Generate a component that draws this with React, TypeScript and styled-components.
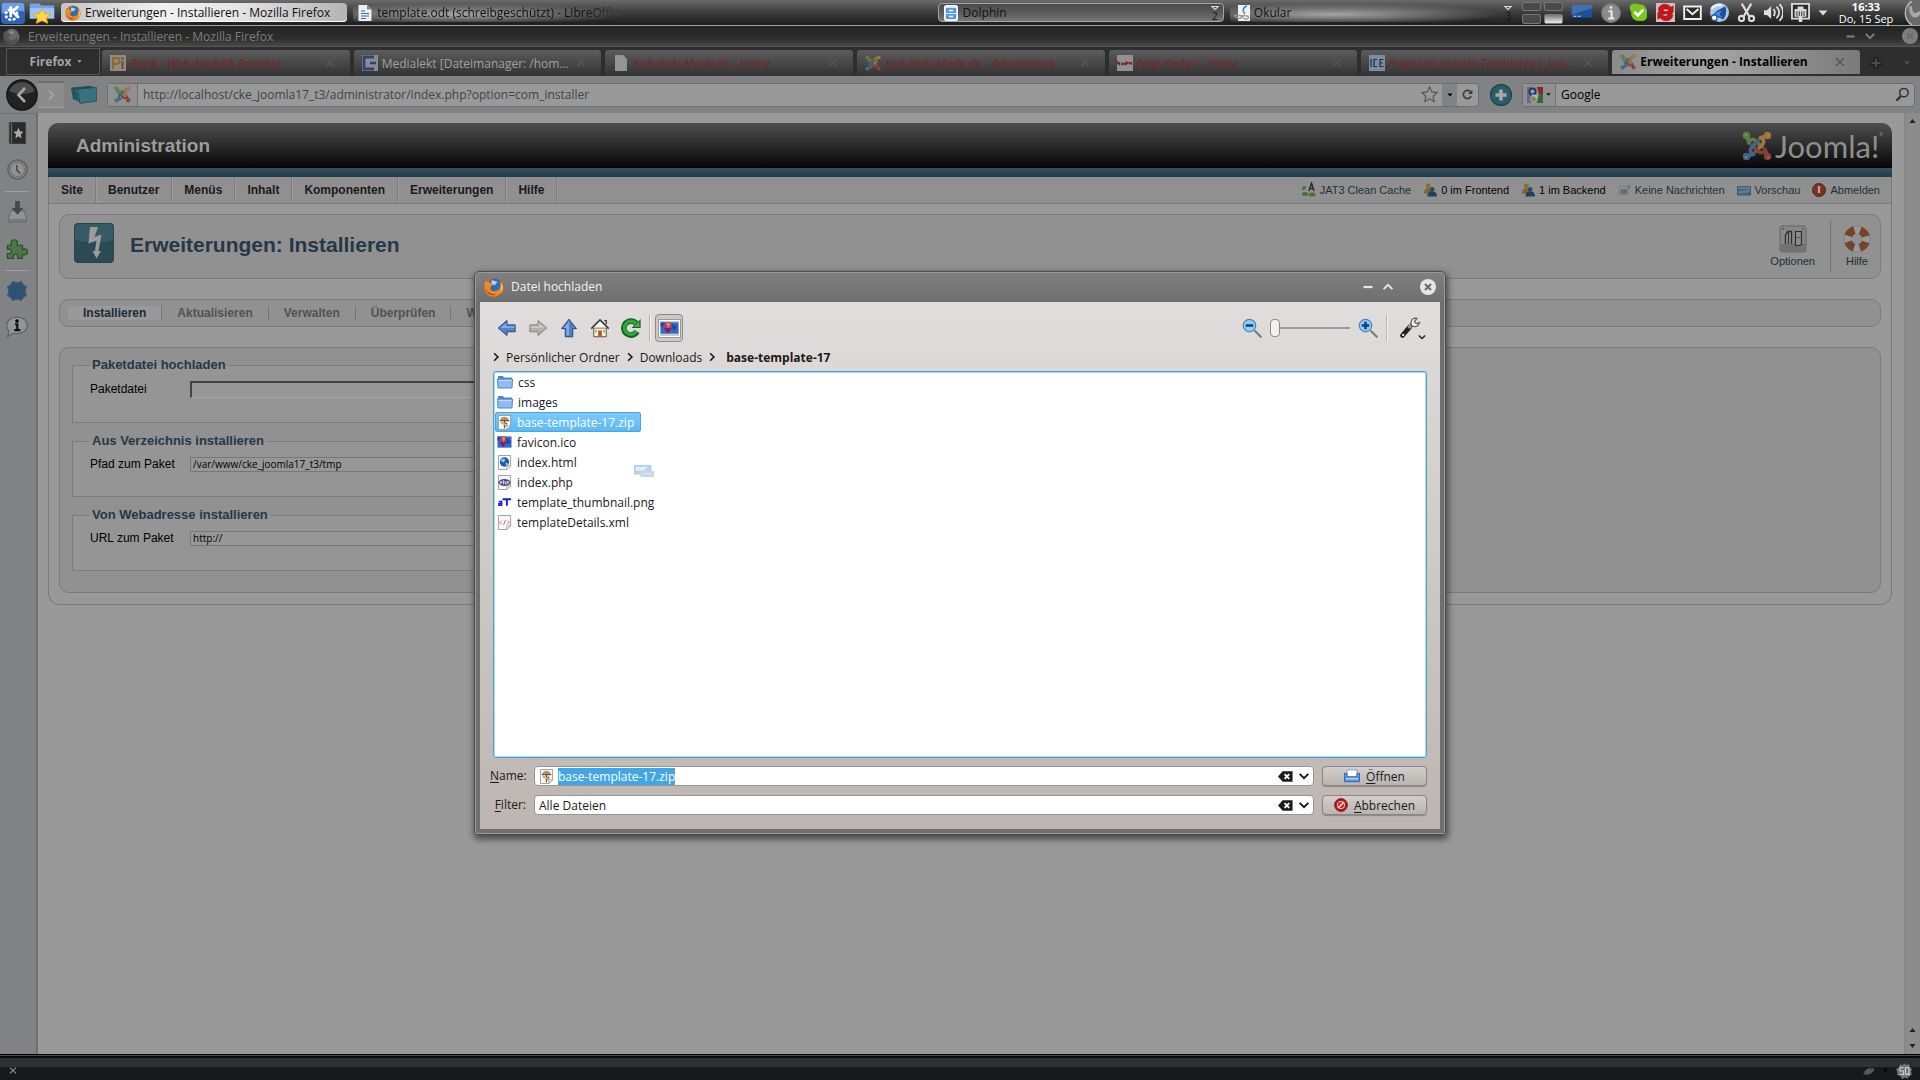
import React, { useEffect, useRef } from 'react';
import styled, { createGlobalStyle, css } from 'styled-components';

const UI = '"Open Sans", "Noto Sans", sans-serif';
const ARIAL = '"Liberation Sans", Arial, sans-serif';

const Global = createGlobalStyle`
  *, *::before, *::after { box-sizing: border-box; }
  body { margin: 0; background: #999; font-family: ${UI}; font-size: 12px; color: #000; }
  button, input, select { font: inherit; color: inherit; margin: 0; padding: 0; border: 0; background: none; }
  a { color: inherit; text-decoration: none; }
  ul { list-style: none; margin: 0; padding: 0; }
  svg { display: block; flex: none; }
`;

/* ---------- icons ---------- */

type IconProps = { name: string; w?: number; h?: number };

const Firefox = ({ grey }: { grey?: boolean }) => (
  <>
    <circle cx="8" cy="8" r="7.6" fill={grey ? '#4a4a4a' : '#e8641b'} />
    <circle cx="8.6" cy="6.4" r="5.4" fill={grey ? '#6a6a6a' : '#2f6db5'} />
    <path d="M6 2.500c2 0 3 1 5 1.500-1 1-2 1-2 2.500-1-.5-3 0-3-1.500z" fill={grey ? '#888' : '#a9daf5'} />
    <path d="M1 3c1 1 2 1 3 1 1 1 3 2 4 2-1 1-3 1-3 3s3 3 5 2c2 0 3-2 3-5 2 2 2 6-1 8-3 2.500-7 2-9.500-.5C.5 11 0 7 1 3z" fill={grey ? '#555' : '#f08a1d'} />
    <path d="M1.500 9c1 3.500 4.500 5 8 4.500-2 2-7 1.500-8-4.500z" fill={grey ? '#444' : '#c63d12'} />
    <path d="M13 4c2.500 2 3 6 .5 9 .8-3 .5-6-.5-9z" fill={grey ? '#777' : '#fcd24a'} />
  </>
);

const Knot = () => (
  <>
    {['#5f7c43', '#9c7440', '#84403a', '#466286'].map((c, i) => (
      <g key={c} transform={`rotate(${i * 90} 12 12)`} stroke={c} fill="none" strokeWidth="3" strokeLinecap="round">
        <circle cx="3.600" cy="3.600" r="2.500" fill={c} strokeWidth="1" />
        <path d="M4 4.500L5.500 9M5.500 9.500C5.500 7 9 5.800 11 7.800L16 12.800" />
        <circle cx="3" cy="3" r=".8" fill="#a8a8a0" stroke="none" opacity=".6" />
      </g>
    ))}
  </>
);

const Page = ({ children }: { children?: React.ReactNode }) => (
  <>
    <path d="M1.500.5h13v11l-4 4h-9z" fill="#f7f7f5" stroke="#9a9a9a" />
    {children}
    <path d="M10.500 15.500v-4h4z" fill="#fff" stroke="#888" strokeWidth=".7" />
  </>
);

const Folder = () => (
  <>
    <path d="M1 3.500V2h5l1 1.500h8V6H1z" fill="#4f86cf" />
    <path d="M.5 5h15l-.5 9H1z" fill="#8fbcf2" stroke="#4f86cf" />
    <path d="M1.500 6.500h13" stroke="#c5defa" />
  </>
);

const Balloon = () => (
  <>
    <rect x=".5" y="1.500" width="15" height="12" fill="#2f6ad2" />
    <path d="M.5 1.500h8l6 5-2 3-12-4z" fill="#2448a0" />
    <circle cx="6.500" cy="5.500" r="3.800" fill="#a03a8b" />
    <path d="M3.500 7.500h6l-2.500 5H6z" fill="#8a1c3f" />
    <path d="M5 2c1-.5 3-.5 4 1L7 8z" fill="#d98a4a" />
  </>
);

const glyphs: Record<string, React.ReactNode> = {
  firefox: <Firefox />,
  firefoxGrey: <Firefox grey />,
  folder: <Folder />,
  image: <Balloon />,
  zip: <Page><path d="M4 4c1-3 7-3 8 0l1 2H3z" fill="#b59465" /><path d="M3 6h10M5 9h6M8 5v9" stroke="#6e5535" strokeWidth="1.400" /><path d="M4 8l7 3" stroke="#c7ae84" strokeWidth="2" /></Page>,
  html: <Page><circle cx="8" cy="7.500" r="5" fill="#1f5aa8" /><path d="M4 6c2-3 4-2 5-1L7 8zM9 8l3 1-2 3z" fill="#9cd0f5" /></Page>,
  php: <Page><ellipse cx="8" cy="8" rx="6.500" ry="3.800" fill="#4a4a86" /><path d="M3.500 10V7h2v1.500H4M7 5.500V10M7 7.500h2V10M10.500 10V7h2v1.500h-2" stroke="#e4e4f4" fill="none" strokeWidth=".9" /></Page>,
  png: <><path d="M2 7h3v4H2V9h3" stroke="#1a1ad0" fill="none" strokeWidth="1.500" /><path d="M6 4.500h9M10.500 4.500V11.500" stroke="#1a1ad0" strokeWidth="2" /></>,
  xml: <Page><path d="M5 6L3 8l2 2M9 5.500l-2 5M11 6l2 2-2 2" stroke="#e0607a" fill="none" /></Page>,
  arrowLeft: <><path d="M1 8l7-6v3.500h6.500v5.500H8V14z" fill="#5484c8" stroke="#24457e" strokeWidth=".8" /><path d="M2.500 8L7.500 4v2.500H14V8z" fill="#86acdf" /></>,
  arrowRight: <><path d="M15 8L8 2v3.500H1.500v5.500H8V14z" fill="#b3b1b0" stroke="#838180" strokeWidth=".8" /><path d="M13.500 8l-5-4v2.500H2V8z" fill="#c9c7c6" /></>,
  arrowUp: <><path d="M8 1l6 7.500h-3V15H5V8.500H2z" fill="#4f80c6" stroke="#24457e" strokeWidth=".8" /><path d="M8 2.500L4 8h2v6h2z" fill="#86acdf" /></>,
  home: <><path d="M3 8h10v7H3z" fill="#f4efe2" stroke="#555" strokeWidth=".8" /><path d="M8 2l5 5.500H3z" fill="#f7f4ec" /><path d="M1 8.500L8 1.500l7 7" fill="none" stroke="#3b3b3b" strokeWidth="1.200" /><path d="M11.500 2h1.500v3" stroke="#3b3b3b" fill="none" /><path d="M6.500 10h3v5h-3z" fill="#b4581c" /><path d="M4 9.500h1.500v2H4zM10.500 9.500H12v2h-1.500z" fill="#d8a037" /></>,
  reload: <><path d="M12.800 10.800A5.600 5.600 0 1 1 12 4.200" fill="none" stroke="#14611d" strokeWidth="4.600" /><path d="M15.700.8v7.200H8.500z" fill="#14611d" /><path d="M12.300 10.700A5.200 5.200 0 1 1 12 4.500" fill="none" stroke="#2fa53a" strokeWidth="2.800" /><path d="M14.800 2.600v4.600h-4.500z" fill="#3cb847" /></>,
  zoomOut: <><path d="M10 10l5.500 5.500" stroke="#7a7a7a" strokeWidth="1.600" /><circle cx="6" cy="6" r="5" fill="#8fcdf5" stroke="#4a86b8" /><path d="M3 6h6" stroke="#123f7d" strokeWidth="2" /></>,
  zoomIn: <><path d="M10 10l5.500 5.500" stroke="#7a7a7a" strokeWidth="1.600" /><circle cx="6" cy="6" r="5" fill="#8fcdf5" stroke="#4a86b8" /><path d="M3 6h6M6 3v6" stroke="#123f7d" strokeWidth="2" /></>,
  wrench: <><path d="M2.500 13.500L8 7" stroke="#222" strokeWidth="3.400" strokeLinecap="round" /><path d="M7 8l3-4" stroke="#999" strokeWidth="2.600" /><path d="M13 1c-3-1-5 2-4 5 2 2 5 1 6-2l-2.500.8-1.300-1.300z" fill="#eee" stroke="#555" strokeWidth=".8" /><circle cx="3" cy="13" r=".9" fill="#ddd" /></>,
  clear: <><path d="M0 8l5-5.500h10.500v11H5z" fill="#1d1d1d" /><path d="M7 5.500l5 5M12 5.500l-5 5" stroke="#fff" strokeWidth="2" /></>,
  chevDown: <path d="M3 5.500l5 5 5-5" fill="none" stroke="currentColor" strokeWidth="2.200" />,
  chevUp: <path d="M3 10.500l5-5 5 5" fill="none" stroke="currentColor" strokeWidth="2.200" />,
  chevRight: <path d="M5.500 3l5 5-5 5" fill="none" stroke="currentColor" strokeWidth="2.200" />,
  minus: <path d="M2 8h12" stroke="currentColor" strokeWidth="3" />,
  close: <><circle cx="8" cy="8" r="8" fill="currentColor" /><path d="M5 5l6 6M11 5l-6 6" stroke="#6d6d6d" strokeWidth="2.200" /></>,
  x: <path d="M3 3l10 10M13 3L3 13" stroke="currentColor" strokeWidth="2" />,
  disk: <><path d="M3 1h10v8H3z" fill="#fff" stroke="#7a9cc8" /><path d="M.5 5v9.500h15V5H13v4H3V5z" fill="#5d9be8" stroke="#2c62b4" /><path d="M2 11h12" stroke="#c3dcfa" strokeWidth="1.500" /></>,
  cancel: <><circle cx="8" cy="8" r="7.300" fill="#b01818" stroke="#7d0d0d" /><circle cx="8" cy="8" r="4.300" fill="#c22a2a" stroke="#efd0d0" strokeWidth="1" /><path d="M4.800 11.200l6.400-6.400" stroke="#f6e6e6" strokeWidth="1.800" /></>,
  kde: <><rect width="16" height="16" rx="2.500" fill="#2a63b8" /><path d="M.5 2.500a2 2 0 0 1 2-2h11a2 2 0 0 1 2 2V7C11 5 5 9 .5 8z" fill="#6f9fe0" /><circle cx="7" cy="9.200" r="3.800" fill="none" stroke="#fff" strokeWidth="1.800" strokeDasharray="2 1" /><path d="M6.500 3v8M11.500 3.200L7.500 7l4.500 4.500" stroke="#fff" strokeWidth="1.800" fill="none" /></>,
  star: <><path d="M.5 3V1h6l1 1.500h8V12H.5z" fill="#6fa6ea" /><path d="M.5 4.500h15V12H.5z" fill="#9cc4f5" /><path d="M8 5l1.700 3.500 3.800.5-2.800 2.600.8 3.900L8 13.600l-3.500 1.900.8-3.900L2.500 9l3.800-.5z" fill="#ffd84a" stroke="#e8a51c" strokeWidth=".6" /></>,
  doc: <><path d="M1.500 0h8.500l4.500 4.500V16h-13z" fill="#f0f0f0" /><path d="M10 0v4.500h4.500" fill="#888" /><path d="M4 6h4M4 8.500h8M4 11h8M4 13.500h5" stroke="#2d6aa5" /></>,
  dolphin: <><rect x="1.500" y=".5" width="13" height="15" rx="1.500" fill="#dbe9f8" stroke="#fff" /><rect x="3" y="3" width="10" height="5" fill="#5a97dc" /><rect x="3" y="9" width="10" height="5" fill="#5a97dc" /><path d="M6 5.500h4M6 11.500h4" stroke="#fff" strokeWidth="1.500" /></>,
  okular: <><path d="M4 0h12v16H4z" fill="#f2f2f2" /><path d="M13 1c-4 1-5 5-2 8" fill="none" stroke="#2d8fd0" strokeWidth="1.600" /><path d="M0 10.500h6c2 0 2 3 0 3H4c-2 0-2-2-3-2.500M7 11c2-1 3 0 6 0 2 0 2 3 0 3h-2c-2 0-2-2-3-3" fill="none" stroke="#999" strokeWidth="1.300" /></>,
  monitor: <><path d="M.5 1h15v12H.5z" fill="#1d4f93" /><path d="M.5 1h15v3L.5 10z" fill="#3d70ac" /><path d="M.5 14h15" stroke="#16294a" strokeWidth="2" /><path d="M2 11.500h2M5 11.500h2" stroke="#cfe4ff" /></>,
  info: <><circle cx="8" cy="8" r="7.500" fill="#8c8c8c" stroke="#777" /><path d="M6 6.500h2.500V12M5.800 12.300h4.800" stroke="#e8e8e8" fill="none" strokeWidth="1.600" /><circle cx="8" cy="3.600" r="1.100" fill="#e8e8e8" /></>,
  skype: <><path d="M1 2c3-3 6-1 8-1 4 0 7 4 6 8 1 3-1 7-5 6-5 1-9-3-8-7-1-2-2-4-1-6z" fill="#7ac81e" /><path d="M4.500 7.500l3 3 4.500-5" stroke="#fff" strokeWidth="2.200" fill="none" /></>,
  sync: <><path d="M0 0h16v16H0z" fill="#dcb9b9" /><path d="M2 6c0-6 9-6 10-2.500l2.500-1V8H9l2-1.500C9.500 4.500 6.500 4.500 6 6.500L9 9c-3 1-6.500 0-7-3z" fill="#c4161c" stroke="#8d0f13" strokeWidth=".4" /><path d="M14 10c0 6-9 6-10 2.500l-2.500 1V8H7L5 9.500c1.500 2 4.500 2 5 0L7 7.500c3-1 6.500-.5 7 2.500z" fill="#c4161c" stroke="#8d0f13" strokeWidth=".4" /></>,
  mail: <><path d="M1 3h14v10.500H1z" fill="#2b2b2b" stroke="#f0f0f0" strokeWidth="1.600" /><path d="M3 5l5 4.500L13 5" fill="none" stroke="#f0f0f0" strokeWidth="1.600" /></>,
  rocket: <><circle cx="8" cy="8" r="8" fill="#a9c8ea" /><path d="M2 12C2 9 6 6 13 3c1 3 1 8-2 11-3-2-5-2-9-2z" fill="#1c4f9e" /><path d="M3 9l7-3-2 4 3 2-5-1z" fill="#4f8ad0" /><circle cx="3.600" cy="12.400" r="2.400" fill="#fff" stroke="#1c4f9e" /><path d="M1 5c2-3 6-4 9-3" stroke="#eef5fd" strokeWidth="2" fill="none" /></>,
  scissors: <g fill="none" stroke="#ddd" strokeWidth="1.800"><path d="M4 .5l6.500 11M12 .5L5.500 11.500" /><circle cx="3.800" cy="13" r="2.200" /><circle cx="12.200" cy="13" r="2.200" /></g>,
  speaker: <><path d="M0 6h2.500L6 2.500v11L2.500 10H0z" fill="#ddd" /><path d="M8 5c1.500 2 1.500 4 0 6M10.500 3c3 3 3 7 0 10M13 1c4 4 4 10 0 14" fill="none" stroke="#ddd" strokeWidth="1.500" /></>,
  net: <><path d="M.8.8h14.400v12.400H.8z" fill="#2c2c2c" stroke="#ddd" strokeWidth="1.500" /><path d="M3 5h2.500V3h5v2H13v6.500H3z" fill="#d8d8d8" /><path d="M5 7v4M7 7v4M9 7v4M11 7v4" stroke="#444" strokeWidth=".9" /><path d="M6.500 11h3v5h-3z" fill="#ddd" /></>,
  triDown: <path d="M1 4h14l-7 8z" fill="currentColor" />,
  triUp: <path d="M1 12h14L8 4z" fill="currentColor" />,
  triHollow: <path d="M1.500 4h13L8 12z" fill="none" stroke="currentColor" strokeWidth="2.500" />,
  cashew: <><path d="M16 0H8C-1 4-1 12 8 16h8z" fill="#6a6a6a" /><path d="M8 0C-1 4-1 12 8 16" fill="none" stroke="#b5b5b5" strokeWidth="1.300" /><path d="M6.500 3.500c0 4 2 6 4.500 6s4-1 4-2.500" stroke="#a9a9a9" fill="none" strokeWidth="3" /></>,
  joomla: <g transform="scale(.667)"><Knot /></g>,
  pi: <><path d="M0 0h16v16H0z" fill="#8f8c86" /><path d="M3 14V3h3.500a3 3 0 0 1 0 6H3" fill="none" stroke="#8a6d25" strokeWidth="2" /><path d="M12.500 6v8" stroke="#7a4330" strokeWidth="2" /><circle cx="12.500" cy="3.500" r="1.300" fill="#7a4330" /></>,
  medialekt: <><path d="M0 0h16v16H0z" fill="#8c8c90" /><path d="M12 2H2v12h10" fill="none" stroke="#2f4377" strokeWidth="2.800" /><path d="M8 8h6" stroke="#2f4377" strokeWidth="2.500" /></>,
  blank: <path d="M2 0h8l4 4v12H2z" fill="#949494" />,
  yorker: <><path d="M0 0h16v16H0z" fill="#929292" /><path d="M.8 9.500V7l1.700 2.500V7M4 8h1.500V9.500H4M6.500 8l.8 1.500.8-1.500.8 1.500L9.500 7l1 1.500 1-1.500M12.500 7v2.500M15 7l-1.500 1.200L15 9.500" stroke="#7c2020" fill="none" strokeWidth="1.200" /></>,
  ice: <><path d="M0 0h16v16H0z" fill="#7d8ca0" /><path d="M2 4v8M8 4.500H5v7h3M14.500 4.500H11v7h3.500M11 8h3" stroke="#1e2e48" fill="none" strokeWidth="1.200" /></>,
  plusCross: <path d="M6 2h4v4h4v4h-4v4H6v-4H2V6h4z" fill="#4a4a4a" stroke="#161616" strokeWidth="1.300" />,
  back: <><circle cx="8" cy="8" r="7.600" fill="#222" stroke="#111" strokeWidth=".6" /><path d="M1.500 6a7 7 0 0 1 13 0C10 8 6 8 1.500 6z" fill="#4c4c4c" /><path d="M9.500 4.500L6.200 8l3.300 3.500" fill="none" stroke="#a8a8a8" strokeWidth="1.300" /></>,
  group: <><path d="M.3 2.500L12 1v10L1.500 12z" fill="#285660" stroke="#1d444d" strokeWidth=".5" /><path d="M2 3L13.500 1.500v11L3.500 13.500z" fill="#2d616c" stroke="#1d444d" strokeWidth=".5" /><path d="M4 3.500L15.800 2v11.500L5.500 15.500z" fill="#37737e" stroke="#1d444d" strokeWidth=".5" /></>,
  starOutline: <path d="M8 1l2.100 4.600 5 .6-3.700 3.400 1 5L8 12.100l-4.400 2.500 1-5L.9 6.200l5-.6z" fill="none" stroke="#555" strokeWidth="1.100" />,
  reloadSmall: <><path d="M12.500 10A5 5 0 1 1 11.500 4.500" fill="none" stroke="#3f3f3f" strokeWidth="2" /><path d="M14 2v5.500H8.500z" fill="#3f3f3f" /></>,
  add: <><circle cx="8" cy="8" r="7.600" fill="#2b5d68" stroke="#1f444c" /><path d="M8 4v8M4 8h8" stroke="#a8a8a8" strokeWidth="2.600" /></>,
  google: <><path d="M0 0h16v16H0z" fill="#8c8c8c" /><path d="M10 0h6v7h-4z" fill="#8a2721" /><path d="M12 7h4v9h-6z" fill="#2c6a3a" /><path d="M0 0h4v16H0z" fill="#2d4a86" opacity=".5" /><circle cx="5.500" cy="4.500" r="3" fill="#a0a0a0" stroke="#1d3a78" strokeWidth="2" /><circle cx="6.500" cy="12" r="3" fill="#8d8048" stroke="#a8a8a8" /><path d="M5 8l5 1-1 2" stroke="#bbb" fill="none" strokeWidth="1.500" /></>,
  search: <><circle cx="9.500" cy="6" r="4.500" fill="none" stroke="#333" strokeWidth="1.600" /><path d="M6.500 9.500L1.500 14.500" stroke="#333" strokeWidth="2.400" /></>,
  book: <><rect x="1" y="0" width="14" height="16" rx="1" fill="#2a2a2a" stroke="#555" strokeWidth=".6" /><path d="M3 .5v15" stroke="#666" /><path d="M8.800 4l1.200 2.800 3 .2-2.300 2 .8 3-2.700-1.700L6.100 12l.8-3-2.300-2 3-.2z" fill="#aaa" /></>,
  clock: <><circle cx="8" cy="8" r="7.300" fill="#858585" stroke="#5b5b5b" strokeWidth="1" /><circle cx="8" cy="8" r="5.400" fill="#929292" stroke="#6a6a6a" strokeWidth=".7" /><path d="M7.500 4.500V8.500l2.500 2.500" stroke="#4a4a4a" fill="none" strokeWidth="1.200" /></>,
  download: <><path d="M2.500 7h11l2 5.500v3H.5v-3z" fill="#939393" stroke="#666" strokeWidth=".7" /><path d="M1 13h14v2.500H1z" fill="#777" /><path d="M6 0h4v5h3l-5 5-5-5h3z" fill="#484848" /></>,
  puzzle: <path d="M1 6h3c-1-2 0-4 2-4s3 2 2 4h4v3c2-1 3.700 0 3.700 1.800S14 13.500 12 12.500V15.500H8.500c.5-2-.2-3-1.500-3s-2 1-1.500 3H1v-3.500c2 .5 3-.2 3-1.500S3 8.500 1 9z" fill="#4d7745" stroke="#2c4f26" strokeWidth=".9" />,
  burst: <path d="M5 .8l1.500 1h3l1.500-1 1.700 2.500 2.500 1.700-1 1.500v3l1 1.500-2.500 1.700-1.700 2.500-1.500-1h-3l-1.500 1-1.700-2.500L.8 11l1-1.500v-3L.8 5l2.500-1.700z" fill="#2f5173" stroke="#3f5c78" strokeWidth=".5" />,
  bubble: <><path d="M8 .8c4.500 0 7.500 2.700 7.500 6s-3 6-7.500 6c-1 0-2 0-3-.4L1.200 15.200l1-4C1 10 .5 8.500.5 6.800.5 3.500 3.500.8 8 .8z" fill="#8f979d" stroke="#586068" strokeWidth=".8" /><circle cx="8" cy="3.600" r="1.300" /><path d="M6.500 6H8.200v4M6 10.200h4.500" stroke="#111" fill="none" strokeWidth="1.600" /></>,
  bolt: <><rect x=".3" y=".3" width="39.400" height="39.400" rx="4" fill="#2b4a54" stroke="#1e353c" strokeWidth=".8" /><path d="M1 5a4 4 0 0 1 4-4h30a4 4 0 0 1 4 4v12C28 20 12 20 1 17z" fill="#365a66" /><path d="M16 4h8l-3.500 10 7-2.500L24.500 28H27l-4.500 7.500L18.500 28h2.500l1.500-10.500-8 3z" fill="#9c9c9c" /></>,
  jat: <><ellipse cx="4" cy="6" rx="2.500" ry="1.500" fill="#4f6e35" transform="rotate(-40 4 6)" /><ellipse cx="5" cy="12" rx="3" ry="2" fill="#4f6e35" /><ellipse cx="12" cy="12.500" rx="3.500" ry="2" fill="#4f6e35" /><path d="M9 9l2.500-8L14 9M10 6.500h3" stroke="#26323a" fill="none" strokeWidth="1.500" /></>,
  users: <><circle cx="6" cy="3.500" r="2.800" fill="#8d6a35" /><path d="M1 12c0-4 2-6 5-6s4 2 4 6z" fill="#84602c" /><circle cx="10.500" cy="7" r="2.500" fill="#2c4963" /><path d="M5 15.500c0-4 2-6 5.500-6s5.500 2 5.500 6z" fill="#243f58" /></>,
  note: <><path d="M1 3h11v12H1z" fill="#8a8d90" stroke="#74777a" strokeWidth=".7" /><path d="M4 8h6v4H4zM4 8l3 2.500L10 8" fill="none" stroke="#35505f" /><path d="M12 2l3 2-3 3" fill="none" stroke="#555" /></>,
  preview: <><path d="M.5 2.500h15v12H.5z" fill="#45647d" stroke="#2b4459" /><path d="M1 4.500h14" stroke="#8296a6" strokeWidth="1.500" /><path d="M1 9l14-3v4L1 13z" fill="#5c7c95" /></>,
  power: <><circle cx="8" cy="8" r="7.500" fill="#7a3222" stroke="#54241a" /><path d="M8 3.500v8" stroke="#b9a49e" strokeWidth="2.600" /></>,
  options: <><rect x="1" y="1" width="26" height="26" rx="2" fill="#868686" stroke="#656565" /><path d="M1.500 19h25v6a2 2 0 0 1-2 2h-21a2 2 0 0 1-2-2z" fill="#727272" /><path d="M6.500 19v-9l2.500-3.500h3.500V19" fill="#8c8c8c" stroke="#2f2f2f" strokeWidth="1.300" /><path d="M9.500 7v12" stroke="#2f2f2f" /><path d="M16.500 6.500h6V19l-2 1.500h-4z" fill="#8c8c8c" stroke="#2f2f2f" strokeWidth="1.200" /><path d="M16.500 12.500h6" stroke="#555" /><circle cx="4" cy="4" r=".9" fill="#555" /><circle cx="24" cy="4" r=".9" fill="#555" /></>,
  ring: <><circle cx="14" cy="14" r="9.200" fill="none" stroke="#989898" strokeWidth="8" /><circle cx="14" cy="14" r="9.200" fill="none" stroke="#74432a" strokeWidth="8" strokeDasharray="8.450 6" strokeDashoffset="-3" /><circle cx="14" cy="14" r="13.200" fill="none" stroke="#6d6d6d" strokeWidth=".5" /></>,
  ghost: <><path d="M0 1h14v11H0z" fill="#b9d2ea" /><path d="M5 8h11v7H5z" fill="#c9d6e4" /><path d="M2 4h8l-2 3H2zM7 11h7" stroke="#e9f3fb" fill="#e0edf8" /></>,
  addonBird: <path d="M1 13c0-5 4-9 9-10l5 1-1 5-5 4-5 1zM9 6l3-1" fill="#5b5b5b" stroke="#3a3a3a" />,
  sq: <><path d="M8 0l2 2 3-1 .5 3L16 6l-1 2.500 1 3-3 1-1 3-3-1-3 1.500-1.500-3L1 12l.5-3L0 6l3-1.500L4 1.500l3 .8z" fill="#777" /><path d="M7.500 4.500H4V8h3.500v3.500H3.500M9.500 4.500H13v7H9.500zM11.500 10l2.500 3" fill="none" stroke="#ccc" strokeWidth="1.100" /></>,
};

const boxes: Record<string, string> = { bolt: '0 0 40 40', options: '0 0 28 28', ring: '0 0 28 28' };

const Icon = ({ name, w = 16, h = w }: IconProps) => (
  <svg width={w} height={h} viewBox={boxes[name] ?? '0 0 16 16'} preserveAspectRatio="none" aria-hidden="true">
    {glyphs[name]}
  </svg>
);

/* ---------- desktop panel ---------- */

const Desktop = styled.div`
  display: flex;
  flex-direction: column;
  min-height: 100vh;
  position: relative;
`;

const Panel = styled.header`
  display: flex;
  align-items: center;
  height: 26px;
  padding-left: 1px;
  background: linear-gradient(#6a6a6a, #3c3c3c 50%, #1c1c1c);
  border-bottom: 1px solid #a2a2a2;
`;

const Launchers = styled.div`
  display: flex;
  align-items: center;
  gap: 4px;
  width: 60px;
`;

const Tasks = styled.nav`
  flex: 1;
  min-width: 0;
  display: grid;
  grid-template-columns: repeat(5, minmax(0, 1fr));
  gap: 6px;
`;

const Task = styled.button<{ $look?: 'active' | 'group' | 'min'; $col?: number }>`
  display: flex;
  align-items: center;
  gap: 4px;
  height: 19px;
  padding: 0 4px;
  border-radius: 4px;
  text-align: left;
  color: #111;
  grid-column: ${p => p.$col};
  white-space: nowrap;
  ${p => p.$look === 'active' && css`
    background: linear-gradient(90deg, #c4c4c4, #f0f0f0 35%, #e6e6e6 60%, #b4b4b4);
    box-shadow: inset 0 -1px 0 #fff;
  `}
  ${p => p.$look === 'group' && css`
    background: linear-gradient(#4a4a4a, #5e5e5e 60%, #777);
    border: 1px solid #a5a5a5;
  `}
  ${p => p.$look === 'min' && css`
    background: radial-gradient(ellipse at 36% 60%, #a6a6a6, rgba(90, 90, 90, 0) 66%);
  `}
`;

const TaskText = styled.span<{ $fade?: boolean }>`
  flex: 1;
  mask-image: ${p => (p.$fade ? 'linear-gradient(90deg, #000 80%, transparent 96%)' : 'none')};
`;

const Count = styled.span`
  display: flex;
  flex-direction: column;
  align-items: center;
  color: #ddd;
  b { color: #111; font-size: 10px; line-height: 10px; font-weight: 400; }
`;

const Tray = styled.div`
  flex: none;
  display: flex;
  align-items: center;
  gap: 8px;
  padding-left: 6px;
  color: #ddd;
`;

const Pager = styled.div`
  display: grid;
  grid-template-columns: 19px 19px;
  grid-template-rows: 9px 10px;
  gap: 3px;
`;

const Desk = styled.button<{ $on?: boolean }>`
  border: 1px solid #777;
  border-radius: 2px;
  background: ${p => (p.$on ? 'linear-gradient(#777, #eee)' : '#4a4a4a')};
`;

const Clock = styled.time`
  width: 60px;
  text-align: center;
  color: #fff;
  font-size: 11px;
  line-height: 12px;
  b { display: block; }
`;

/* ---------- browser ---------- */

const TitleBar = styled.div`
  display: flex;
  align-items: center;
  height: 21px;
  padding: 0 0 0 3px;
  background: linear-gradient(#242424, #2c2c2c 60%, #484848);
  border-bottom: 1px solid #555;
  color: #7d7d7d;
`;

const WindowName = styled.span`
  flex: 1;
  margin-left: 8px;
`;

const WinButton = styled.button`
  display: grid;
  place-items: center;
  width: 20px;
  height: 16px;
`;

const TabBar = styled.div`
  display: flex;
  align-items: flex-end;
  height: 29px;
  padding: 0 6px;
  gap: 4px;
  background: #2e2e2e;
`;

const FirefoxButton = styled.button`
  width: 94px;
  height: 27px;
  align-self: center;
  display: flex;
  align-items: center;
  justify-content: center;
  gap: 6px;
  padding-left: 6px;
  border: 1px solid #565656;
  background: #2d2d2d;
  color: #a5a5a5;
  font-weight: 700;
  margin-right: -2px;
`;

const Tab = styled.div<{ $active?: boolean; $dirty?: boolean }>`
  flex: 1;
  min-width: 0;
  height: ${p => (p.$active ? 24 : 26)}px;
  align-self: ${p => (p.$active ? 'center' : 'flex-end')};
  display: flex;
  align-items: center;
  gap: 4px;
  padding: 0 14px 0 8px;
  border-radius: 3px 3px 0 0;
  background: ${p => (p.$active ? 'linear-gradient(90deg, #8a8a8a, #a5a5a5 40%, #7a7a7a)' : 'linear-gradient(#5c5c5c, #333)')};
  color: ${p => (p.$active ? '#000' : p.$dirty ? '#762424' : '#a0a0a0')};
  font-style: ${p => (p.$dirty ? 'italic' : 'normal')};
  font-weight: ${p => (p.$active ? 700 : 400)};
`;

const TabTitle = styled.button`
  flex: 1;
  min-width: 0;
  white-space: nowrap;
  text-align: left;
  font-style: inherit;
  font-weight: inherit;
`;

const Plain = styled.button`
  display: grid;
  place-items: center;
  color: #555;
`;

const TabTools = styled.div`
  display: flex;
  align-items: center;
  justify-content: space-between;
  width: 45px;
  height: 26px;
  margin-left: 5px;
  padding-right: 4px;
`;

const NavBar = styled.div`
  display: flex;
  align-items: center;
  height: 37px;
  padding: 0 5px 0 6px;
  background: #818284;
`;

const Forward = styled.button`
  width: 26px;
  height: 27px;
  display: grid;
  place-items: center;
  background: #8c8c8d;
  border-top: 2px solid #6e6e6f;
  border-bottom: 1px solid #9b9b9b;
  color: #a5a5a5;
`;

const Field = styled.div<{ $w?: number }>`
  display: flex;
  align-items: center;
  height: 24px;
  flex: ${p => (p.$w ? `0 0 ${p.$w}px` : '1')};
  background: #999;
  border: 1px solid #6d6d6f;
  border-radius: 3px;
`;

const SiteIcon = styled.span<{ $pad: number }>`
  display: flex;
  align-items: center;
  gap: 3px;
  height: 22px;
  padding: 0 ${p => p.$pad}px;
  border-right: 1px solid #707070;
  background: #909090;
  color: #111;
`;

const Address = styled.input`
  flex: 1;
  min-width: 0;
  height: 20px;
  padding-left: 5px;
  outline: 0;
  color: #444;
`;

const SearchText = styled(Address)`
  color: #000;
`;

const Gap = styled.span<{ $w: number }>`
  width: ${p => p.$w}px;
  flex: none;
`;

const DropCell = styled.button`
  width: 15px;
  height: 22px;
  margin: 0 4px;
  display: grid;
  place-items: center;
  background: #828385;
`;

const Viewport = styled.div`
  flex: 1;
  display: flex;
  background: #999;
`;

const SideBar = styled.aside`
  width: 38px;
  padding: 7px 0 0 5px;
  display: flex;
  flex-direction: column;
  align-items: flex-start;
  gap: 12px;
  background: #818284;
  border-right: 2px solid #6f6f70;
  border-top: 1px solid #6f6f70;
  button { width: 24px; height: 24px; }
`;

const SideRule = styled.hr`
  width: 24px;
  margin: -2px 0 -4px;
  border: 0;
  border-top: 1px solid #a0a0a0;
`;

const Scroll = styled.div`
  width: 16px;
  display: flex;
  flex-direction: column;
  align-items: center;
  padding: 4px 0;
  gap: 8px;
  background: #8c8c8c;
  border-left: 1px solid #858585;
  button:first-child { margin-bottom: auto; }
  button { color: #222; }
`;

const StatusBar = styled.footer`
  display: flex;
  align-items: center;
  gap: 8px;
  height: 26px;
  padding: 6px 8px 0;
  border-top: 1px solid #000;
  box-shadow: inset 0 1px 0 #4b4b4b, inset 0 3px 0 #0a0a0a;
  background: linear-gradient(#2e3133 50%, #17191a 50%);
  button { color: #8a8a8a; }
  button:first-child { margin-right: auto; }
`;

/* ---------- Joomla administration ---------- */

const Admin = styled.main`
  flex: 1;
  min-width: 0;
  padding: 10px 12px 0 10px;
  font-family: ${ARIAL};
`;

const AdminHead = styled.div`
  display: flex;
  align-items: center;
  justify-content: space-between;
  height: 54px;
  padding: 0 9px 9px 28px;
  background: linear-gradient(#4f4f4f, #060606 45px, #345160 45px, #233a47);
  border-radius: 10px 10px 0 0;
  color: #9c9c9c;
  h1 { margin: 0; font-size: 19px; line-height: 24px; }
`;

const Brand = styled.a`
  display: flex;
  align-items: center;
  gap: 3px;
  font: 400 31px/30px Lato, sans-serif;
  color: #8e8e8e;
  sup { font-size: 9px; line-height: 12px; align-self: flex-start; margin-left: -3px; }
`;

const Frame = styled.div`
  border: 1px solid #7a7a7a;
  border-top: 0;
  border-radius: 0 0 12px 12px;
`;

const MenuBar = styled.div`
  display: flex;
  align-items: center;
  height: 27px;
  background: #909090;
  border-bottom: 1px solid #787878;
`;

const MenuItem = styled.a`
  height: 26px;
  line-height: 26px;
  padding: 0 12px;
  border-right: 1px solid #7e7e7e;
  box-shadow: 1px 0 0 #9c9c9c;
  font-size: 12px;
  font-weight: 700;
  color: #1a1a1a;
`;

const StatusLinks = styled.div`
  margin-left: auto;
  display: flex;
  gap: 12px;
  padding-right: 11px;
  font-size: 11px;
`;

const StatusLink = styled.a<{ $plain?: boolean }>`
  display: flex;
  align-items: center;
  gap: 4px;
  color: ${p => (p.$plain ? '#000' : '#1c2f3c')};
`;

const Content = styled.div`
  display: flex;
  flex-direction: column;
  gap: 20px;
  padding: 10px 10px 11px;
`;

const Card = styled.section`
  background: #919191;
  border: 1px solid #7b7b7b;
  border-radius: 10px;
`;

const TitleCard = styled(Card)`
  display: flex;
  align-items: center;
  height: 65px;
  padding: 0 9px 7px 14px;
  gap: 16px;
  h2 { flex: 1; margin: 3px 0 0; font-size: 21px; line-height: 26px; color: #263846; }
`;

const ToolList = styled.div`
  display: flex;
  gap: 15px;
  align-items: flex-start;
  margin-top: 6px;
`;

const Tool = styled.button<{ $line?: boolean }>`
  display: flex;
  flex-direction: column;
  align-items: center;
  gap: 2px;
  height: 52px;
  font-size: 11px;
  color: #1c2f3c;
  padding: ${p => (p.$line ? '5px 0 0 12px' : '5px 0 0 0')};
  border-left: ${p => (p.$line ? '1px solid #747474' : '0')};
`;

const SubMenu = styled(Card)`
  display: flex;
  align-items: center;
  height: 28px;
  padding-left: 8px;
`;

const SubItem = styled.a<{ $active?: boolean }>`
  line-height: 14px;
  padding: 0 15px;
  font-size: 12px;
  font-weight: 700;
  color: ${p => (p.$active ? '#1c2c39' : '#525252')};
  background: ${p => (p.$active ? '#999' : 'none')};
  border-right: 1px solid #757575;
`;

const FormCard = styled(Card)`
  display: flex;
  flex-direction: column;
  gap: 10px;
  padding: 9px 12px 21px;
`;

const FieldSet = styled.fieldset`
  width: 70%;
  margin: 0;
  padding: 8px 17px 24px;
  border: 1px solid #7b7b7b;
  background: #959595;
  background-clip: padding-box;
  legend { padding: 0 3px; margin-left: -1px; font-size: 13px; line-height: 16px; font-weight: 700; color: #263846; }
`;

const FormRow = styled.label`
  display: flex;
  align-items: center;
  font-size: 12px;
  line-height: 15px;
  span { width: 100px; }
`;

const Entry = styled.input<{ $sunken?: boolean }>`
  width: 500px;
  height: ${p => (p.$sunken ? 17 : 15)}px;
  font-family: ${UI};
  font-size: 10px;
  padding: 0 2px;
  background: #979797;
  border: 1px solid #777;
  ${p => p.$sunken && css`
    border-width: 2px 1px 1px 2px;
    border-style: solid;
    border-color: #444 #999 #a2a2a2 #444;
  `}
`;

/* ---------- file dialog ---------- */

const Dialog = styled.section`
  position: absolute;
  top: 271px;
  left: 50%;
  transform: translateX(-50%);
  width: 972px;
  padding: 0 5px 5px;
  background: linear-gradient(#808080, #6f6f6f 30px);
  border: 1px solid #4d4d4d;
  border-radius: 5px 5px 3px 3px;
  box-shadow: inset 0 0 0 1px #9a9a9a, 1px 3px 7px 1px rgba(0, 0, 0, .55);
`;

const DialogTitle = styled.header`
  display: flex;
  align-items: center;
  height: 30px;
  padding: 0 2px 0 4px;
  color: #f2f2f2;
  h2 { flex: 1; margin: 0 0 0 7px; font-size: 12px; line-height: 16px; font-weight: 400; }
  button { color: #e6e6e6; }
`;

const DialogBody = styled.div`
  padding: 12px 13px 14px 10px;
  background: linear-gradient(#e0dddc, #d4cfcd 35%, #bdb5b1);
`;

const Tools = styled.div`
  display: flex;
  align-items: center;
  height: 28px;
  padding-left: 4px;
`;

const ToolButton = styled.button`
  width: 26px;
  height: 26px;
  margin-right: 5px;
  display: grid;
  place-items: center;
`;

const ToolRule = styled.span`
  width: 1px;
  height: 26px;
  background: #b9b5b3;
  box-shadow: 1px 0 0 #f4f3f2;
`;

const Preview = styled.button`
  width: 28px;
  height: 28px;
  margin-left: 5px;
  display: grid;
  place-items: center;
  border: 1px solid #8e8b8a;
  border-radius: 4px;
  background: #cbc8c6;
`;

const PreviewImage = styled.span`
  border: 1px solid #fff;
  outline: 1px solid #999;
`;

const ZoomTools = styled.div`
  margin-left: auto;
  display: flex;
  align-items: center;
  gap: 8px;
  color: #222;
`;

const Slider = styled.input`
  appearance: none;
  width: 80px;
  height: 20px;
  &::-webkit-slider-runnable-track { height: 2px; background: #9d9a98; }
  &::-webkit-slider-thumb {
    appearance: none;
    width: 10px;
    height: 18px;
    margin-top: -8px;
    border: 1px solid #8d8a88;
    border-radius: 4px;
    background: #f2f1f0;
  }
`;

const WrenchButton = styled.button`
  display: flex;
  align-items: flex-end;
  margin-left: 4px;
  svg + svg { margin: 0 0 -3px -4px; }
`;

const Crumbs = styled.nav`
  display: flex;
  align-items: center;
  height: 20px;
  margin: 5px 0 4px;
  gap: 4px;
  color: #1a1a1a;
  a:last-child { font-weight: 700; margin-left: 4px; }
`;

const Files = styled.ul`
  height: 387px;
  margin-left: 3px;
  padding: 0 0 0 1px;
  background: #fff;
  border: 1px solid #4e9fc9;
  box-shadow: inset 0 0 0 1px #a8dcf6;
  border-radius: 3px;
`;

const File = styled.button<{ $selected?: boolean }>`
  display: flex;
  align-items: center;
  gap: 5px;
  height: 20px;
  padding: 0 7px 0 2px;
  border-radius: 3px;
  color: ${p => (p.$selected ? '#fff' : '#1a1a1a')};
  background: ${p => (p.$selected ? 'linear-gradient(#7fcbfc, #5ab8f5)' : 'none')};
  box-shadow: ${p => (p.$selected ? 'inset 0 0 0 1px #4aa5e0' : 'none')};
`;

const DragGhost = styled.span`
  position: absolute;
  left: 159px;
  top: 192px;
`;

const Fields = styled.form`
  display: grid;
  grid-template-columns: 36px 1fr 105px;
  column-gap: 8px;
  row-gap: 9px;
  margin-top: 8px;
  color: #1a1a1a;
  label { text-align: right; line-height: 20px; }
  u { text-underline-offset: 2px; }
`;

const Combo = styled.div`
  display: flex;
  align-items: center;
  gap: 4px;
  height: 20px;
  padding: 0 2px 0 4px;
  background: #fff;
  border: 1px solid #9a9492;
  border-radius: 4px;
`;

const NameInput = styled.input`
  flex: 1;
  height: 18px;
  outline: 0;
  &::selection { background: #42a6e4; color: #fff; }
`;

const FilterSelect = styled.select`
  flex: 1;
  height: 18px;
  appearance: none;
  outline: 0;
`;

const Push = styled.button`
  display: flex;
  align-items: center;
  justify-content: center;
  gap: 6px;
  height: 20px;
  border: 1px solid #8b8684;
  border-radius: 4px;
  background: linear-gradient(#d3cfcd, #bab4b1);
  box-shadow: 0 1px 1px #8b8684;
`;

const tabs = [
  { icon: 'pi', title: 'Piwik › Web Analytik Berichte', dirty: true },
  { icon: 'medialekt', title: 'Medialekt [Dateimanager: /hom…' },
  { icon: 'blank', title: 'Kult-Italy-Mode.de - Home', dirty: true },
  { icon: 'joomla', title: 'Kult-Italy-Mode.de - Administrat…', dirty: true },
  { icon: 'yorker', title: 'New Yorker - Home', dirty: true },
  { icon: 'ice', title: 'Premium Joomla Templates | Joo…', dirty: true },
  { icon: 'joomla', title: 'Erweiterungen - Installieren', active: true },
];

const files = [
  ['folder', 'css'],
  ['folder', 'images'],
  ['zip', 'base-template-17.zip'],
  ['image', 'favicon.ico'],
  ['html', 'index.html'],
  ['php', 'index.php'],
  ['png', 'template_thumbnail.png'],
  ['xml', 'templateDetails.xml'],
];

const trayIcons = ['skype', 'sync', 'mail', 'rocket', 'scissors', 'speaker', 'net'];

function FileDialog() {
  const name = useRef<HTMLInputElement>(null);
  useEffect(() => {
    name.current?.focus();
    name.current?.select();
  }, []);
  return (
    <Dialog role="dialog" aria-labelledby="dialog-title">
      <DialogTitle>
        <Icon name="firefox" w={20} />
        <h2 id="dialog-title">Datei hochladen</h2>
        <WinButton aria-label="Minimieren"><Icon name="minus" w={12} /></WinButton>
        <WinButton aria-label="Maximieren"><Icon name="chevUp" w={14} /></WinButton>
        <Gap $w={20} />
        <WinButton aria-label="Schließen"><Icon name="close" /></WinButton>
      </DialogTitle>
      <DialogBody>
        <Tools>
          <ToolButton aria-label="Zurück"><Icon name="arrowLeft" w={20} /></ToolButton>
          <ToolButton aria-label="Vor"><Icon name="arrowRight" w={20} /></ToolButton>
          <ToolButton aria-label="Aufwärts"><Icon name="arrowUp" w={20} /></ToolButton>
          <ToolButton aria-label="Persönlicher Ordner"><Icon name="home" w={20} /></ToolButton>
          <ToolButton aria-label="Neu laden"><Icon name="reload" w={20} /></ToolButton>
          <ToolRule />
          <Preview aria-label="Vorschau"><PreviewImage><Icon name="image" w={19} h={15} /></PreviewImage></Preview>
          <ZoomTools>
            <Icon name="zoomOut" w={20} />
            <Slider type="range" aria-label="Symbolgröße" defaultValue={0} />
            <Icon name="zoomIn" w={20} />
            <ToolRule />
            <WrenchButton aria-label="Einstellungen"><Icon name="wrench" w={22} /><Icon name="chevDown" w={10} /></WrenchButton>
          </ZoomTools>
        </Tools>
        <Crumbs aria-label="Pfad">
          <Icon name="chevRight" w={12} /><a href="#home">Persönlicher Ordner</a>
          <Icon name="chevRight" w={12} /><a href="#downloads">Downloads</a>
          <Icon name="chevRight" w={12} /><a href="#base">base-template-17</a>
        </Crumbs>
        <Files>
          {files.map(([icon, label]) => (
            <li key={label}>
              <File $selected={icon === 'zip'}><Icon name={icon} w={icon === 'folder' ? 16 : 15} />{label}</File>
            </li>
          ))}
        </Files>
        <Fields onSubmit={e => e.preventDefault()}>
          <label htmlFor="name"><u>N</u>ame:</label>
          <Combo>
            <Icon name="zip" w={15} />
            <NameInput id="name" ref={name} defaultValue="base-template-17.zip" />
            <Plain type="button" aria-label="Namen löschen"><Icon name="clear" w={15} /></Plain>
            <Icon name="chevDown" w={14} />
          </Combo>
          <Push type="submit"><Icon name="disk" w={16} h={14} /><span><u>Ö</u>ffnen</span></Push>
          <label htmlFor="filter"><u>F</u>ilter:</label>
          <Combo>
            <FilterSelect id="filter"><option>Alle Dateien</option></FilterSelect>
            <Plain type="button" aria-label="Filter löschen"><Icon name="clear" w={15} /></Plain>
            <Icon name="chevDown" w={14} />
          </Combo>
          <Push type="button"><Icon name="cancel" w={14} /><span><u>A</u>bbrechen</span></Push>
        </Fields>
      </DialogBody>
      <DragGhost><Icon name="ghost" w={20} h={14} /></DragGhost>
    </Dialog>
  );
}

export default function App() {
  return (
    <>
      <Global />
      <Desktop>
        <Panel>
          <Launchers>
            <Icon name="kde" w={24} h={22} />
            <Icon name="star" w={26} h={22} />
          </Launchers>
          <Tasks>
            <Task $look="active"><Icon name="firefox" /><TaskText>Erweiterungen - Installieren - Mozilla Firefox</TaskText></Task>
            <Task $look="min"><Icon name="doc" /><TaskText $fade>template.odt (schreibgeschützt) - LibreOffice</TaskText></Task>
            <Task $look="group" $col={4}><Icon name="dolphin" /><TaskText>Dolphin</TaskText><Count><Icon name="triHollow" w={8} h={6} /><b>2</b></Count></Task>
            <Task $look="min"><Icon name="okular" /><TaskText>Okular</TaskText><Count><Icon name="triHollow" w={8} h={6} /><b>3</b></Count></Task>
          </Tasks>
          <Tray>
            <Pager><Desk aria-label="1" /><Desk aria-label="2" /><Desk aria-label="3" /><Desk $on aria-label="4" /></Pager>
            <Icon name="monitor" w={22} h={17} />
            <Icon name="info" w={20} />
            {trayIcons.map(n => <Icon key={n} name={n} w={19} />)}
            <Icon name="triDown" w={10} />
            <Clock><b>16:33</b>Do, 15 Sep</Clock>
            <Icon name="cashew" w={16} h={24} />
          </Tray>
        </Panel>

        <TitleBar>
          <Icon name="firefoxGrey" w={17} />
          <WindowName>Erweiterungen - Installieren - Mozilla Firefox</WindowName>
          <WinButton aria-label="Minimieren"><Icon name="minus" w={11} /></WinButton>
          <WinButton aria-label="Maximieren"><Icon name="chevDown" w={14} /></WinButton>
          <Gap $w={20} />
          <WinButton aria-label="Schließen"><Icon name="close" /></WinButton>
        </TitleBar>

        <TabBar>
          <FirefoxButton>Firefox <Icon name="triDown" w={5} /></FirefoxButton>
          {tabs.map(t => (
            <Tab key={t.title} $active={t.active} $dirty={t.dirty}>
              <Icon name={t.icon} />
              <TabTitle>{t.title}</TabTitle>
              <Plain aria-label="Tab schließen"><Icon name="x" w={12} /></Plain>
            </Tab>
          ))}
          <TabTools>
            <Plain aria-label="Neuer Tab"><Icon name="plusCross" w={14} /></Plain>
            <Plain aria-label="Alle Tabs"><Icon name="triDown" w={6} /></Plain>
          </TabTools>
        </TabBar>

        <NavBar>
          <Plain aria-label="Zurück"><Icon name="back" w={32} /></Plain>
          <Forward aria-label="Vor"><Icon name="chevRight" w={14} /></Forward>
          <Gap $w={7} />
          <Icon name="group" w={26} h={19} />
          <Gap $w={10} />
          <Field>
            <SiteIcon $pad={6}><Icon name="joomla" w={17} /></SiteIcon>
            <Address aria-label="Adresse" defaultValue="http://localhost/cke_joomla17_t3/administrator/index.php?option=com_installer" />
            <Icon name="starOutline" w={17} />
            <DropCell aria-label="Verlauf"><Icon name="triDown" w={6} /></DropCell>
            <Icon name="reloadSmall" w={13} />
            <Gap $w={4} />
          </Field>
          <Gap $w={11} />
          <Icon name="add" w={22} />
          <Gap $w={10} />
          <Field $w={393}>
            <SiteIcon $pad={4}><Icon name="google" /><Icon name="triDown" w={5} /></SiteIcon>
            <SearchText aria-label="Suche" defaultValue="Google" />
            <Icon name="search" w={15} />
            <Gap $w={4} />
          </Field>
        </NavBar>

        <Viewport>
          <SideBar>
            <Plain aria-label="Lesezeichen"><Icon name="book" w={19} h={22} /></Plain>
            <Plain aria-label="Chronik"><Icon name="clock" w={21} /></Plain>
            <SideRule />
            <Plain aria-label="Downloads"><Icon name="download" w={19} h={22} /></Plain>
            <Plain aria-label="Add-ons"><Icon name="puzzle" w={22} /></Plain>
            <SideRule />
            <Plain aria-label="Erweiterung"><Icon name="burst" w={22} /></Plain>
            <Plain aria-label="Seiteninfo"><Icon name="bubble" w={22} /></Plain>
          </SideBar>
          <Admin>
            <AdminHead>
              <h1>Administration</h1>
              <Brand href="#joomla">
                <svg width="30" height="30" viewBox="0 0 24 24" aria-hidden="true"><Knot /></svg>
                Joomla!<sup>°</sup>
              </Brand>
            </AdminHead>
            <Frame>
              <MenuBar>
                {['Site', 'Benutzer', 'Menüs', 'Inhalt', 'Komponenten', 'Erweiterungen', 'Hilfe'].map(m => (
                  <MenuItem key={m} href="#menu">{m}</MenuItem>
                ))}
                <StatusLinks>
                  <StatusLink href="#cache"><Icon name="jat" />JAT3 Clean Cache</StatusLink>
                  <StatusLink as="span" $plain><Icon name="users" w={14} />0 im Frontend</StatusLink>
                  <StatusLink as="span" $plain><Icon name="users" w={14} />1 im Backend</StatusLink>
                  <StatusLink href="#messages"><Icon name="note" w={13} h={12} />Keine Nachrichten</StatusLink>
                  <StatusLink href="#preview"><Icon name="preview" w={14} h={11} />Vorschau</StatusLink>
                  <StatusLink href="#logout"><Icon name="power" w={14} />Abmelden</StatusLink>
                </StatusLinks>
              </MenuBar>
              <Content>
                <TitleCard>
                  <Icon name="bolt" w={40} />
                  <h2>Erweiterungen: Installieren</h2>
                  <ToolList>
                    <Tool><Icon name="options" w={28} />Optionen</Tool>
                    <Tool $line><Icon name="ring" w={28} />Hilfe</Tool>
                  </ToolList>
                </TitleCard>
                <SubMenu as="nav">
                  {['Installieren', 'Aktualisieren', 'Verwalten', 'Überprüfen', 'Warnungen'].map((s, i) => (
                    <SubItem key={s} href="#sub" $active={i === 0}>{s}</SubItem>
                  ))}
                </SubMenu>
                <FormCard>
                  <FieldSet>
                    <legend>Paketdatei hochladen</legend>
                    <FormRow><span>Paketdatei</span><Entry $sunken /></FormRow>
                  </FieldSet>
                  <FieldSet>
                    <legend>Aus Verzeichnis installieren</legend>
                    <FormRow><span>Pfad zum Paket</span><Entry defaultValue="/var/www/cke_joomla17_t3/tmp" /></FormRow>
                  </FieldSet>
                  <FieldSet>
                    <legend>Von Webadresse installieren</legend>
                    <FormRow><span>URL zum Paket</span><Entry defaultValue="http://" /></FormRow>
                  </FieldSet>
                </FormCard>
              </Content>
            </Frame>
          </Admin>
          <Scroll>
            <Plain aria-label="Nach oben"><Icon name="triUp" w={7} h={8} /></Plain>
            <Plain aria-label="Nach oben"><Icon name="triUp" w={7} h={8} /></Plain>
            <Plain aria-label="Nach unten"><Icon name="triDown" w={7} h={8} /></Plain>
          </Scroll>
        </Viewport>

        <StatusBar>
          <Plain aria-label="Leiste schließen"><Icon name="x" w={10} h={9} /></Plain>
          <Icon name="addonBird" w={12} h={10} />
          <Icon name="triDown" w={5} h={6} />
          <Icon name="sq" w={16} />
        </StatusBar>
        <FileDialog />
      </Desktop>
    </>
  );
}
